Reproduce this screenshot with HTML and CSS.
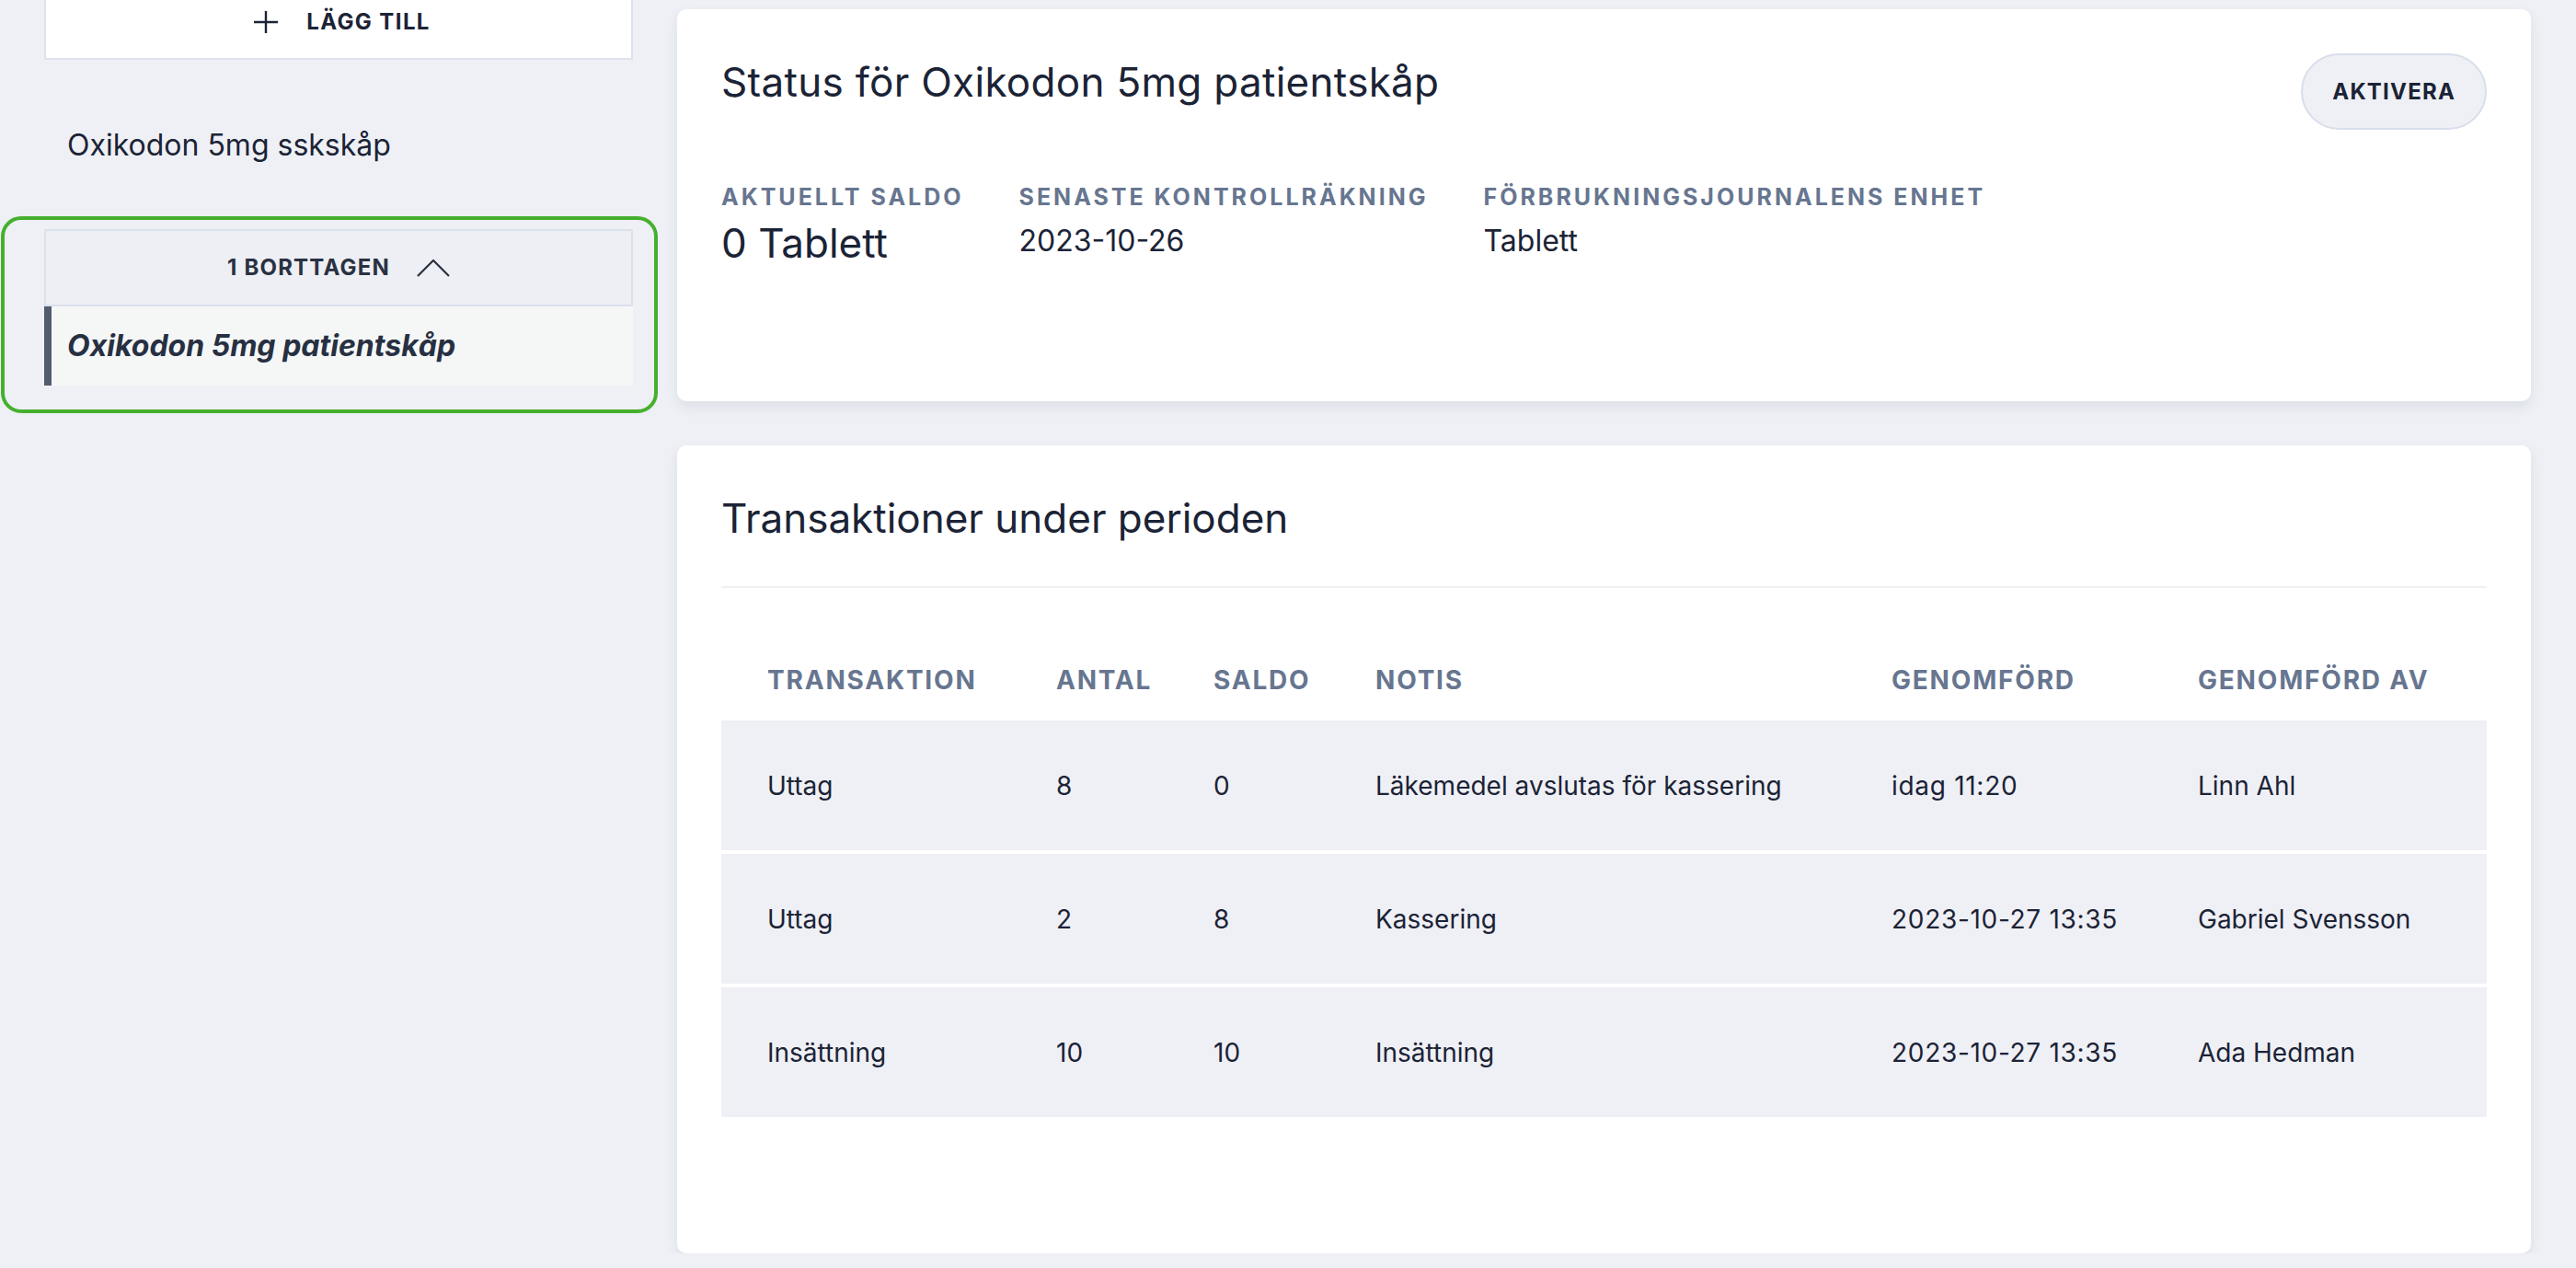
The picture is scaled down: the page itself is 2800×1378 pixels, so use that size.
FILE: index.html
```html
<!DOCTYPE html>
<html lang="sv">
<head>
<meta charset="utf-8">
<title>Status för Oxikodon 5mg patientskåp</title>
<link rel="stylesheet" href="styles.css">
</head>
<body>
<div class="page">
  <aside class="sidebar">
    <button class="add-btn" type="button">
      <svg class="plus" viewBox="0 0 26 24" width="26" height="24" aria-hidden="true"><path d="M13 0V24M0 12H26" stroke="#1b2336" stroke-width="2.4" fill="none"/></svg>
      <span>LÄGG TILL</span>
    </button>
    <div class="side-item">Oxikodon 5mg sskskåp</div>
    <div class="removed-group">
      <div class="removed-toggle">
        <span>1 BORTTAGEN</span>
        <svg class="chevron" viewBox="0 0 36 19" width="36" height="19" aria-hidden="true"><polyline points="1,18 18,1 35,18" stroke="#2a3142" stroke-width="2.2" fill="none"/></svg>
      </div>
      <div class="side-item active">Oxikodon 5mg patientskåp</div>
    </div>
  </aside>
  <main class="main">
    <section class="card status-card">
      <div class="card-head">
        <h1 class="card-title status-title">Status för Oxikodon 5mg patientskåp</h1>
        <button class="pill-btn" type="button">AKTIVERA</button>
      </div>
      <dl class="stats">
        <div class="stat">
          <dt>AKTUELLT SALDO</dt>
          <dd class="stat-big">0 Tablett</dd>
        </div>
        <div class="stat">
          <dt>SENASTE KONTROLLRÄKNING</dt>
          <dd>2023-10-26</dd>
        </div>
        <div class="stat">
          <dt>FÖRBRUKNINGSJOURNALENS ENHET</dt>
          <dd>Tablett</dd>
        </div>
      </dl>
    </section>
    <section class="card tx-card">
      <div class="tx-head">
        <h2 class="card-title">Transaktioner under perioden</h2>
      </div>
      <table class="tx-table">
        <colgroup>
          <col class="c1"><col class="c2"><col class="c3"><col class="c4"><col class="c5"><col>
        </colgroup>
        <thead>
          <tr><th>TRANSAKTION</th><th>ANTAL</th><th>SALDO</th><th>NOTIS</th><th>GENOMFÖRD</th><th>GENOMFÖRD AV</th></tr>
        </thead>
        <tbody>
          <tr><td>Uttag</td><td>8</td><td>0</td><td>Läkemedel avslutas för kassering</td><td class="date">idag 11:20</td><td>Linn Ahl</td></tr>
          <tr><td>Uttag</td><td>2</td><td>8</td><td>Kassering</td><td class="date">2023-10-27 13:35</td><td>Gabriel Svensson</td></tr>
          <tr><td>Insättning</td><td>10</td><td>10</td><td>Insättning</td><td class="date">2023-10-27 13:35</td><td>Ada Hedman</td></tr>
        </tbody>
      </table>
    </section>
  </main>
</div>
</body>
</html>
```

FILE: styles.css
```css
* { box-sizing: border-box; }

body {
  margin: 0;
  background: #eef0f5;
  font-family: Inter, "Noto Sans", "Liberation Sans", sans-serif;
  color: #1b2336;
  overflow: hidden;
}

.page {
  display: flex;
  align-items: flex-start;
}

/* Sidebar */
.sidebar {
  width: 640px;
  margin-left: 48px;
  display: flex;
  flex-direction: column;
}

.add-btn {
  width: 100%;
  height: 83px;
  margin-top: -18px;
  padding: 0 0 0 8px;
  border: 2px solid #dde3ee;
  background: #ffffff;
  display: flex;
  align-items: center;
  justify-content: center;
  gap: 31px;
  font-family: inherit;
  font-weight: 700;
  font-size: 24px;
  line-height: 32px;
  letter-spacing: 1.4px;
  color: #1b2336;
}

.plus { display: block; }

.side-item {
  height: 86px;
  margin-top: 50px;
  padding-left: 25px;
  display: flex;
  align-items: center;
  font-size: 32px;
  line-height: 48px;
  color: #1b2336;
}

.removed-group {
  position: relative;
  margin-top: 48px;
}

.removed-group::after {
  content: "";
  position: absolute;
  top: -14px;
  left: -47px;
  right: -27px;
  bottom: -30px;
  border: 4px solid #46b02e;
  border-radius: 22px;
  pointer-events: none;
}

.removed-toggle {
  height: 84px;
  border: 2px solid #dbe1eb;
  background: #edeff4;
  display: flex;
  align-items: center;
  justify-content: center;
  gap: 29px;
  font-weight: 700;
  font-size: 24px;
  line-height: 32px;
  letter-spacing: 1.2px;
  color: #2a3142;
}

.chevron { display: block; }

.side-item.active {
  margin-top: 0;
  border-left: 8px solid #535b6f;
  padding-left: 17px;
  background: #f5f7f7;
  font-weight: 700;
  font-style: italic;
  color: #273042;
}

/* Main */
.main {
  flex: 1;
  margin-left: 48px;
  margin-right: 49px;
  padding-top: 10px;
  display: flex;
  flex-direction: column;
  gap: 48px;
}

.card {
  background: #ffffff;
  border-radius: 10px;
  box-shadow: 0 6px 14px rgba(40, 52, 95, 0.09);
  padding: 48px;
}

.card-head {
  display: flex;
  justify-content: space-between;
  align-items: flex-start;
}

.card-title {
  margin: 0;
  font-size: 44px;
  font-weight: 400;
  line-height: 62px;
  color: #1b2336;
}

.status-title {
  letter-spacing: 0.3px;
}

.pill-btn {
  height: 83px;
  padding: 0 32px;
  border: 2px solid #d8deeb;
  border-radius: 999px;
  background: #eff0f5;
  font-family: inherit;
  font-weight: 700;
  font-size: 24px;
  line-height: 32px;
  letter-spacing: 1.2px;
  color: #1b2336;
}

.stats {
  display: flex;
  gap: 60px;
  margin: 57px 0 97px;
}

.stat dt {
  font-weight: 700;
  font-size: 25px;
  line-height: 32px;
  letter-spacing: 3px;
  color: #677690;
  margin-bottom: 8px;
}

.stat dd {
  margin: 0;
  font-size: 32px;
  line-height: 48px;
  color: #1b2336;
}

.stat dd.stat-big {
  font-size: 44px;
  line-height: 53px;
}

/* Transactions */
.tx-head {
  padding-bottom: 43px;
  border-bottom: 2px solid #eef0f4;
}

.tx-table {
  width: 100%;
  table-layout: fixed;
  border-collapse: separate;
  border-spacing: 0 4px;
  margin-top: 56px;
  margin-bottom: 96px;
}

.tx-table .c1 { width: 364px; }
.tx-table .c2 { width: 171px; }
.tx-table .c3 { width: 176px; }
.tx-table .c4 { width: 561px; }
.tx-table .c5 { width: 333px; }

.tx-table th {
  height: 80px;
  padding: 0;
  text-align: left;
  vertical-align: middle;
  font-weight: 700;
  font-size: 28px;
  line-height: 40px;
  letter-spacing: 1.8px;
  color: #677690;
}

.tx-table td {
  height: 141px;
  padding: 0;
  vertical-align: middle;
  background: #eff0f5;
  font-size: 28px;
  line-height: 40px;
  color: #1b2336;
}

.tx-table td.date {
  letter-spacing: 0.7px;
}

.tx-table th:first-child,
.tx-table td:first-child {
  padding-left: 50px;
}
```
